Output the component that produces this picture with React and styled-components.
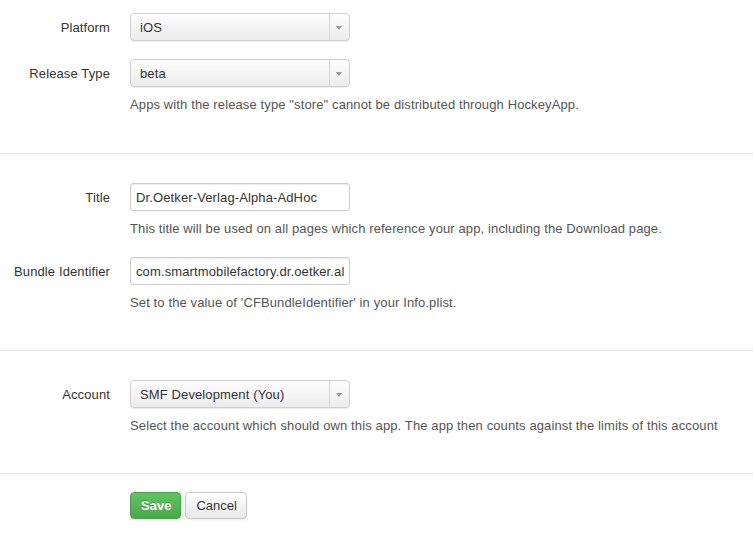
import React from 'react'
import styled, { createGlobalStyle } from 'styled-components'

const GlobalStyle = createGlobalStyle`
  body {
    margin: 0;
    background: #fff;
    font-family: "Liberation Sans", Arial, sans-serif;
    font-size: 13px;
    letter-spacing: 0.12px;
    color: #333;
  }
`

const sections = [
  {
    rows: [
      { label: 'Platform', kind: 'select', value: 'iOS' },
      {
        label: 'Release Type',
        kind: 'select',
        value: 'beta',
        help: 'Apps with the release type "store" cannot be distributed through HockeyApp.',
      },
    ],
  },
  {
    rows: [
      {
        label: 'Title',
        kind: 'input',
        value: 'Dr.Oetker-Verlag-Alpha-AdHoc',
        help: 'This title will be used on all pages which reference your app, including the Download page.',
      },
      {
        label: 'Bundle Identifier',
        kind: 'input',
        value: 'com.smartmobilefactory.dr.oetker.alpha',
        help: "Set to the value of 'CFBundleIdentifier' in your Info.plist.",
      },
    ],
  },
  {
    rows: [
      {
        label: 'Account',
        kind: 'select',
        value: 'SMF Development (You)',
        help: 'Select the account which should own this app. The app then counts against the limits of this account',
      },
    ],
  },
]

const App = () => {
  return (
    <>
      <GlobalStyle />
      <Form>
        {sections.map((section, i) => (
          <Fieldset key={i} $first={i === 0}>
            {section.rows.map((row) => (
              <ControlGroup key={row.label}>
                <Label>{row.label}</Label>
                <Controls>
                  {row.kind === 'select' ? (
                    <Select>
                      <span>{row.value}</span>
                      <Arrow />
                    </Select>
                  ) : (
                    <Input type="text" defaultValue={row.value} />
                  )}
                  {row.help && <Help>{row.help}</Help>}
                </Controls>
              </ControlGroup>
            ))}
          </Fieldset>
        ))}
        <Actions>
          <Button $primary>Save</Button>
          <Button>Cancel</Button>
        </Actions>
      </Form>
    </>
  )
}

const Form = styled.form`
  width: 100%;
`

const Fieldset = styled.div`
  padding: ${(p) => (p.$first ? '13px 0 38px' : '29px 0 37px')};
  border-bottom: 1px solid #e5e5e5;
  display: flex;
  flex-direction: column;
  gap: 18px;
`

const ControlGroup = styled.div`
  display: flex;
  align-items: flex-start;
`

const Label = styled.label`
  width: 110px;
  flex-shrink: 0;
  padding-top: 1px;
  text-align: right;
  line-height: 27px;
  color: #333;
`

const Controls = styled.div`
  margin-left: 20px;
  display: flex;
  flex-direction: column;
`

const Select = styled.div`
  position: relative;
  box-sizing: border-box;
  width: 220px;
  height: 28px;
  padding: 0 8px;
  display: flex;
  align-items: center;
  border: 1px solid #d0d0d0;
  border-radius: 4px;
  background: linear-gradient(#fdfdfd, #ececec);
  box-shadow: 0 1px 1px rgba(0, 0, 0, 0.08);
  color: #333;
  span {
    padding-left: 1px;
  }
`

const Arrow = styled.div`
  position: absolute;
  right: 0;
  top: 0;
  bottom: 0;
  width: 19px;
  border-left: 1px solid #d6d6d6;
  &::after {
    content: '';
    position: absolute;
    left: 6px;
    top: 12px;
    border-left: 3px solid transparent;
    border-right: 3px solid transparent;
    border-top: 4px solid #999;
  }
`

const Input = styled.input`
  box-sizing: border-box;
  width: 220px;
  height: 28px;
  padding: 0 5px;
  margin: 0;
  border: 1px solid #ccc;
  border-radius: 3px;
  box-shadow: inset 0 1px 1px rgba(0, 0, 0, 0.075);
  font-family: "Liberation Sans", Arial, sans-serif;
  font-size: 13px;
  letter-spacing: 0.12px;
  color: #333;
  outline: none;
`

const Help = styled.p`
  margin: 9px 0 1px;
  line-height: 18px;
  color: #555;
  white-space: nowrap;
`

const Actions = styled.div`
  padding: 18px 0 20px 130px;
  display: flex;
  gap: 4px;
`

const Button = styled.button`
  height: 27px;
  padding: 0 9px 0 10px;
  border-radius: 4px;
  font-family: "Liberation Sans", Arial, sans-serif;
  font-size: 13px;
  cursor: pointer;
  border: 1px solid ${(p) => (p.$primary ? '#46a046' : '#c8c8c8')};
  background: ${(p) =>
    p.$primary
      ? 'linear-gradient(#62c462, #4aa84a)'
      : 'linear-gradient(#ffffff, #e8e8e8)'};
  color: ${(p) => (p.$primary ? '#fff' : '#333')};
  font-weight: ${(p) => (p.$primary ? 'bold' : 'normal')};
  text-shadow: ${(p) =>
    p.$primary ? '0 -1px 0 rgba(0,0,0,0.2)' : '0 1px 0 rgba(255,255,255,0.7)'};
  box-shadow: 0 1px 2px rgba(0, 0, 0, 0.08);
`

export default App
